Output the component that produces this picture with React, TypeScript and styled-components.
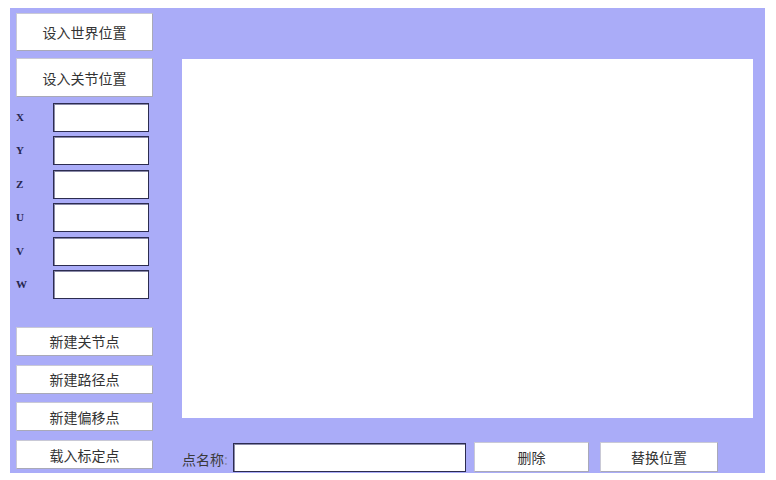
import styled, { createGlobalStyle } from "styled-components";

const GlobalStyle = createGlobalStyle`
  html, body {
    margin: 0;
    padding: 0;
    background: #ffffff;
  }
  body {
    font-family: "Noto Sans CJK SC", "Noto Sans", sans-serif;
  }
`;

const Frame = styled.div`
  width: 755px;
  height: 465px;
  margin: 8px 0 0 10px;
  background: #aaacf8;
  display: grid;
  grid-template-columns: 143px 1fr;
  column-gap: 29px;
`;

const Side = styled.div`
  display: flex;
  flex-direction: column;
  padding: 5px 0 4px 6px;
`;

const Button = styled.button<{ $h?: number; $w?: number }>`
  box-sizing: border-box;
  width: ${(p) => (p.$w ? `${p.$w}px` : "137px")};
  height: ${(p) => p.$h ?? 29}px;
  padding: 0;
  background: #ffffff;
  border: 1px solid #c9c9d6;
  border-right-color: #a9a9b8;
  border-bottom-color: #a9a9b8;
  font-family: "Noto Sans CJK SC", sans-serif;
  font-size: 14px;
  color: #333333;
  display: flex;
  align-items: center;
  justify-content: center;
`;

const TopGroup = styled.div`
  display: flex;
  flex-direction: column;
  gap: 7px;
`;

const Fields = styled.div`
  display: grid;
  grid-auto-rows: 29px;
  row-gap: 4.4px;
  margin-top: 6px;
`;

const Field = styled.label`
  display: grid;
  grid-template-columns: 37px 96px;
  align-items: center;
`;

const Axis = styled.span`
  font-family: "Liberation Serif", "DejaVu Serif", serif;
  font-size: 11px;
  font-weight: bold;
  color: #26264e;
  padding-bottom: 1px;
`;

const Input = styled.input<{ $w?: number }>`
  box-sizing: border-box;
  width: ${(p) => (p.$w ? `${p.$w}px` : "100%")};
  height: 29px;
  margin: 0;
  background: #ffffff;
  border: 1px solid #2c2c50;
  box-shadow: inset 1px 1px 0 #8a8aa8;
  outline: none;
`;

const BottomGroup = styled.div`
  display: flex;
  flex-direction: column;
  gap: 8.7px;
  margin-top: auto;
`;

const Main = styled.div`
  display: flex;
  flex-direction: column;
  padding: 51px 12px 1px 0;
`;

const Canvas = styled.div`
  height: 359px;
  background: #ffffff;
`;

const Footer = styled.div`
  display: flex;
  align-items: center;
  margin-top: auto;
  height: 30px;
`;

const NameLabel = styled.span`
  width: 51px;
  font-size: 14px;
  color: #3a3a3a;
  padding-top: 4px;
  span {
    color: #8c8cb0;
  }
`;

const Actions = styled.div`
  display: flex;
  gap: 11px;
  margin-left: 8px;
`;

const sideActions = ["新建关节点", "新建路径点", "新建偏移点", "载入标定点"];
const axes = ["X", "Y", "Z", "U", "V", "W"];

export default function App() {
  return (
    <>
      <GlobalStyle />
      <Frame>
        <Side>
          <TopGroup>
            <Button $h={38}>设入世界位置</Button>
            <Button $h={39}>设入关节位置</Button>
          </TopGroup>
          <Fields>
            {axes.map((a) => (
              <Field key={a}>
                <Axis>{a}</Axis>
                <Input />
              </Field>
            ))}
          </Fields>
          <BottomGroup>
            {sideActions.map((t) => (
              <Button key={t}>{t}</Button>
            ))}
          </BottomGroup>
        </Side>
        <Main>
          <Canvas />
          <Footer>
            <NameLabel>
              点名称<span>:</span>
            </NameLabel>
            <Input $w={233} />
            <Actions>
              <Button $w={115} $h={30}>删除</Button>
              <Button $w={118} $h={30}>替换位置</Button>
            </Actions>
          </Footer>
        </Main>
      </Frame>
    </>
  );
}
